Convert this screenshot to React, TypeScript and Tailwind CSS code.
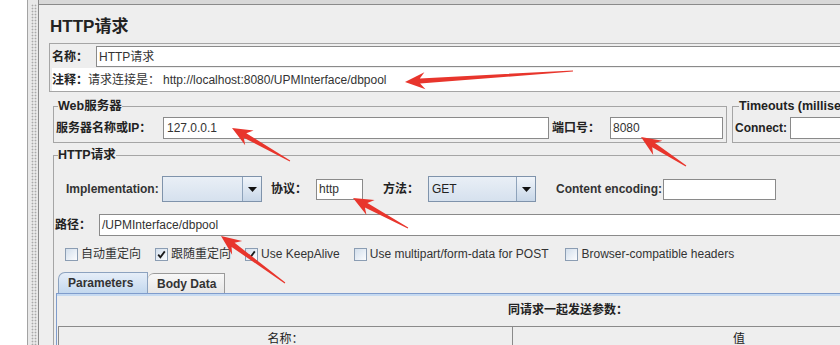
import React from "react";

function arrowPoints(tx: number, ty: number, hx: number, hy: number): string {
  const dx = hx - tx;
  const dy = hy - ty;
  const L = Math.hypot(dx, dy);
  const ux = dx / L;
  const uy = dy / L;
  const px = -uy;
  const py = ux;
  const headLen = 20;
  const headHalf = 8.5;
  const shaftHalf = 2.6;
  const tailHalf = 0.5;
  const bx = hx - ux * headLen;
  const by = hy - uy * headLen;
  const nx = hx - ux * (headLen - 5);
  const ny = hy - uy * (headLen - 5);
  const pts: [number, number][] = [
    [tx + px * tailHalf, ty + py * tailHalf],
    [nx + px * shaftHalf, ny + py * shaftHalf],
    [bx + px * headHalf, by + py * headHalf],
    [hx, hy],
    [bx - px * headHalf, by - py * headHalf],
    [nx - px * shaftHalf, ny - py * shaftHalf],
    [tx - px * tailHalf, ty - py * tailHalf],
  ];
  return pts.map((p) => `${p[0].toFixed(1)},${p[1].toFixed(1)}`).join(" ");
}

const arrows: [number, number, number, number][] = [
  [573, 71, 405, 82],
  [290, 161, 232, 128],
  [686, 166, 641, 137],
  [408, 228, 353, 198],
  [285, 283, 221, 236],
];

function Combo({ w, value }: { w: string; value?: string }) {
  return (
    <div className={`${w} h-[26px] flex border border-[#7f93ab] bg-gradient-to-b from-[#e9eff6] to-[#d6e1ee]`}>
      <div className="flex-1 flex items-center pl-[3px] text-[12px] text-[#222]">{value}</div>
      <div className="w-[19px] h-full border-l border-[#8ea3bb] bg-gradient-to-b from-[#f1f5fa] to-[#c8d7e8] flex items-center justify-center">
        <svg width="9" height="5" viewBox="0 0 9 5">
          <polygon points="0,0 9,0 4.5,5" fill="#111" />
        </svg>
      </div>
    </div>
  );
}

function Check({ checked, label }: { checked?: boolean; label: string }) {
  return (
    <div className="flex items-center gap-[3px]">
      <div className="w-[13px] h-[13px] border border-[#8b9db3] bg-gradient-to-br from-[#d3dfec] to-[#fbfcfe] flex items-center justify-center">
        {checked && (
          <svg width="9" height="9" viewBox="0 0 9 9">
            <path d="M1.2 4.6 L3.4 7.2 L7.8 1.4" stroke="#1a1a1a" strokeWidth="1.8" fill="none" />
          </svg>
        )}
      </div>
      <span className="text-[12px] text-[#333] leading-[14px]">{label}</span>
    </div>
  );
}

export default function App() {
  return (
    <div className="relative w-[840px] h-[345px] overflow-hidden flex bg-[#eeeeee] font-['Liberation_Sans','Noto_Sans_CJK_SC',sans-serif] text-[12px] text-[#222]">
      <div className="w-[28px] h-full shrink-0 bg-white border-r border-[#a3a3a3]" />
      <div className="w-[10px] h-full shrink-0 bg-[#e8e8e8] flex">
        <div className="ml-[3px] mt-[4px] w-[6px] h-full bg-[radial-gradient(circle,#a9a9a9_0.8px,transparent_1.1px)] bg-[length:3px_3px]" />
      </div>
      <div className="flex-1 min-w-0 h-full flex flex-col border-l border-[#8a8a8a]">
        <div className="h-[5px] shrink-0 bg-[#d8d8d8] border-b border-[#8a8a8a]" />
        <div className="pl-[10px] w-[860px] flex flex-col">
          <div className="h-[38px] pt-[6px] pl-[1px] flex items-center text-[17px] font-bold text-[#222]">HTTP请求</div>

          <div className="border-t border-l border-b border-[#a5a5a5] pt-[2px] pl-[2px] flex flex-col">
            <div className="flex items-center h-[21px]">
              <span className="w-[44px] font-bold">名称：</span>
              <div className="flex-1 h-[21px] bg-white border border-[#8a8a8a] flex items-center pl-[2px] text-[#333]">HTTP请求</div>
            </div>
            <div className="mt-[1px] h-[23px] bg-white flex items-center text-[#333]">
              <span className="font-bold text-[#222]">注释：</span>
              <span>请求连接是：</span>
              <span className="ml-[3px]">http://localhost:8080/UPMInterface/dbpool</span>
            </div>
          </div>

          <div className="mt-[5px] ml-[4px] flex gap-[5px] items-stretch">
            <fieldset className="border border-[#a5a5a5] pl-[2px] pr-[3px] pb-[3px]">
              <legend className="ml-[2px] text-[12.5px] font-bold leading-[18px] text-[#222]">Web服务器</legend>
              <div className="flex items-center pt-[2px]">
                <span className="w-[107px] font-bold">服务器名称或IP：</span>
                <div className="w-[386px] h-[22px] bg-white border border-[#8a8a8a] flex items-center pl-[3px] text-[#333]">127.0.0.1</div>
                <span className="ml-[3px] w-[58px] font-bold">端口号：</span>
                <div className="w-[113px] h-[22px] bg-white border border-[#8a8a8a] flex items-center pl-[2px] text-[#333]">8080</div>
              </div>
            </fieldset>
            <fieldset className="flex-1 border border-[#a5a5a5] pl-[2px] pb-[3px]">
              <legend className="ml-[4px] text-[12.5px] font-bold leading-[18px] text-[#222]">Timeouts (milliseconds)</legend>
              <div className="flex items-center pt-[2px]">
                <span className="w-[55px] font-bold">Connect:</span>
                <div className="w-[120px] h-[22px] bg-white border border-[#8a8a8a]" />
              </div>
            </fieldset>
          </div>

          <fieldset className="mt-[3px] ml-[4px] border border-[#a5a5a5] pb-[20px]">
            <legend className="ml-[4px] text-[12.5px] font-bold leading-[18px] text-[#222]">HTTP请求</legend>
            <div className="pt-[12px] pl-[12px] flex items-center h-[38px]">
              <span className="w-[96px] font-bold text-[#333]">Implementation:</span>
              <Combo w="w-[100px]" />
              <span className="ml-[9px] w-[45px] font-bold">协议：</span>
              <div className="w-[47px] h-[21px] bg-white border border-[#8a8a8a] flex items-center pl-[2px] text-[#333]">http</div>
              <span className="ml-[20px] w-[45px] font-bold">方法：</span>
              <Combo w="w-[108px]" value="GET" />
              <span className="ml-[20px] w-[107px] font-bold text-[#333]">Content encoding:</span>
              <div className="w-[113px] h-[21px] bg-white border border-[#8a8a8a]" />
            </div>
            <div className="mt-[12px] pl-[1px] flex items-center">
              <span className="w-[44px] font-bold">路径：</span>
              <div className="flex-1 h-[22px] bg-white border border-[#8a8a8a] flex items-center pl-[2px] text-[#333]">/UPMInterface/dbpool</div>
            </div>
            <div className="mt-[11px] pl-[11px] h-[14px] flex items-center gap-[14px]">
              <Check label="自动重定向" />
              <Check checked label="跟随重定向" />
              <Check checked label="Use KeepAlive" />
              <Check label="Use multipart/form-data for POST" />
              <div className="ml-[3px]">
                <Check label="Browser-compatible headers" />
              </div>
            </div>
            <div className="mt-[11px] pl-[4px] flex items-end h-[21px]">
              <div className="w-[90px] h-[21px] border-t border-l border-r border-[#8ca2bf] rounded-tl-[7px] bg-gradient-to-b from-[#e6eef8] to-[#c3d8ee] flex items-center pl-[9px] font-bold text-[#333]">Parameters</div>
              <div className="w-[77px] h-[20px] border-t border-r border-[#9a9a9a] rounded-tl-[6px] bg-gradient-to-b from-[#f8f8f8] to-[#e6e6e6] flex items-center pl-[9px] font-bold text-[#333]">Body Data</div>
            </div>
            <div className="ml-[2px] border-t border-l border-[#7f9ccc] flex flex-col">
              <div className="h-[2px] bg-[#c6daf1]" />
              <div className="pt-[5px] h-[25px] pl-[451px] font-bold leading-[18px] text-[#222]">同请求一起发送参数：</div>
              <div className="mt-[5px] ml-[1px] flex border-t border-l border-[#8a8a8a] h-[24px]">
                <div className="w-[454px] border-r border-[#8a8a8a] flex items-center justify-center text-[#222]">名称：</div>
                <div className="w-[452px] flex items-center justify-center text-[#222]">值</div>
              </div>
            </div>
          </fieldset>
        </div>
      </div>

      <svg className="absolute inset-0 pointer-events-none" width="840" height="345">
        {arrows.map((a, i) => (
          <polygon key={i} points={arrowPoints(a[0], a[1], a[2], a[3])} fill="#e8352c" />
        ))}
      </svg>
    </div>
  );
}
